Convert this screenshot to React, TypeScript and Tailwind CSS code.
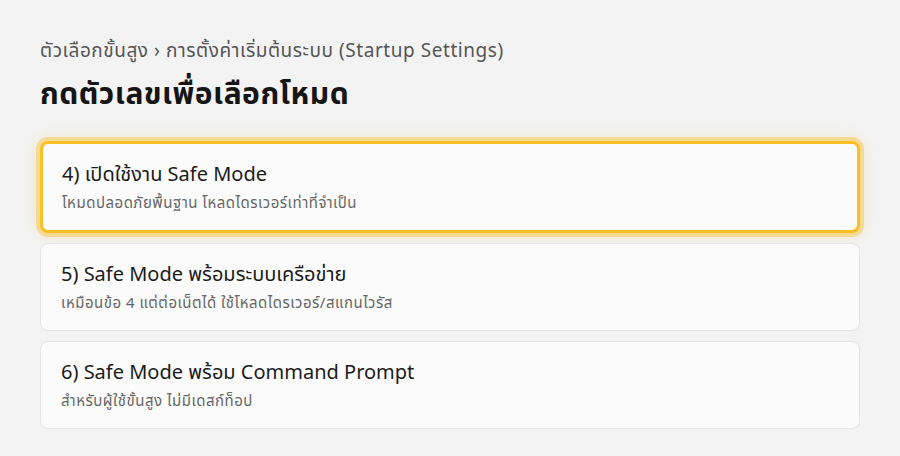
const modes = [
  {
    title: "4) เปิดใช้งาน Safe Mode",
    desc: "โหมดปลอดภัยพื้นฐาน โหลดไดรเวอร์เท่าที่จำเป็น",
    active: true,
  },
  {
    title: "5) Safe Mode พร้อมระบบเครือข่าย",
    desc: "เหมือนข้อ 4 แต่ต่อเน็ตได้ ใช้โหลดไดรเวอร์/สแกนไวรัส",
    active: false,
  },
  {
    title: "6) Safe Mode พร้อม Command Prompt",
    desc: "สำหรับผู้ใช้ขั้นสูง ไม่มีเดสก์ท็อป",
    active: false,
  },
];

export default function App() {
  return (
    <div
      className="w-[900px] h-[456px] bg-[#f3f3f3] px-10 pt-[37px]"
      style={{ fontFamily: '"Noto Sans", "Noto Sans Thai", Inter, sans-serif' }}
    >
      <p className="text-[19px] leading-[26px] tracking-[0.55px] text-[#555555]">
        ตัวเลือกขั้นสูง › การตั้งค่าเริ่มต้นระบบ (Startup Settings)
      </p>
      <h1 className="mt-[11px] text-[30px] leading-[38px] tracking-[0.5px] font-bold text-[#151515]">
        กดตัวเลขเพื่อเลือกโหมด
      </h1>

      <div className="mt-[29px] flex flex-col gap-[10px]">
        {modes.map((m) => (
          <div
            key={m.title}
            className={
              m.active
                ? "rounded-lg bg-[#fbfbfb] border-[3px] border-[#fbbf24] ring-4 ring-[#fbbf24]/40 shadow-[0_0_18px_rgba(234,179,8,0.25)] px-[19px] pt-[17px] pb-[17px]"
                : "rounded-lg bg-[#fbfbfb] border border-[#e4e4e4] px-5 pt-[17px] pb-[17px]"
            }
          >
            <div className="text-[20px] leading-[26px] text-[#1b1b1b]">{m.title}</div>
            <div className="mt-[4px] text-[15px] leading-[22px] tracking-[0.5px] text-[#666666]">{m.desc}</div>
          </div>
        ))}
      </div>
    </div>
  );
}
